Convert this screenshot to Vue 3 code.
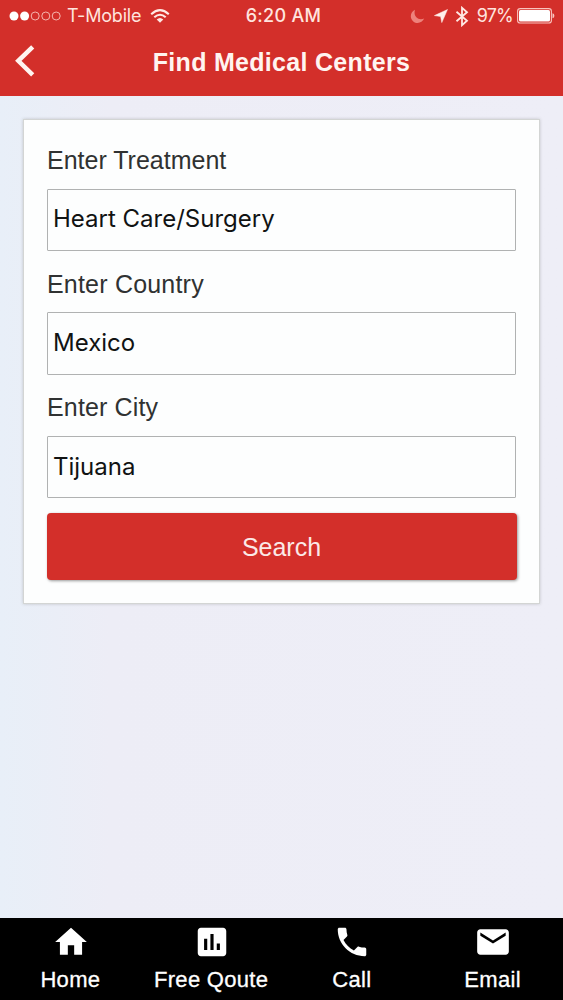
<script setup>
import { ref } from 'vue'

const fields = ref([
  { id: 'treatment', label: 'Enter Treatment', value: 'Heart Care/Surgery' },
  { id: 'country', label: 'Enter Country', value: 'Mexico' },
  { id: 'city', label: 'Enter City', value: 'Tijuana' },
])

const tabs = [
  { name: 'Home', icon: 'M10 20v-6h4v6h5v-8h3L12 3 2 12h3v8z' },
  {
    name: 'Free Qoute',
    icon: 'M19 3H5c-1.1 0-2 .9-2 2v14c0 1.1.9 2 2 2h14c1.1 0 2-.9 2-2V5c0-1.1-.9-2-2-2zM9 17H7v-7h2v7zm4 0h-2V7h2v10zm4 0h-2v-4h2v4z',
  },
  {
    name: 'Call',
    icon: 'M6.62 10.79c1.44 2.83 3.76 5.14 6.59 6.59l2.2-2.2c.27-.27.67-.36 1.02-.24 1.12.37 2.33.57 3.57.57.55 0 1 .45 1 1V20c0 .55-.45 1-1 1-9.39 0-17-7.61-17-17 0-.55.45-1 1-1h3.5c.55 0 1 .45 1 1 0 1.25.2 2.45.57 3.57.11.35.03.74-.25 1.02l-2.2 2.2z',
  },
  {
    name: 'Email',
    icon: 'M20 4H4c-1.1 0-1.99.9-1.99 2L2 18c0 1.1.9 2 2 2h16c1.1 0 2-.9 2-2V6c0-1.1-.9-2-2-2zm0 4l-8 5-8-5V6l8 5 8-5v2z',
  },
]
</script>

<template>
  <div class="screen">
    <header class="top">
      <div class="status">
        <div class="left">
          <svg class="signal" width="54" height="12" viewBox="0 0 54 12">
            <circle cx="5" cy="6" r="4.5" fill="#fff" />
            <circle cx="15.6" cy="6" r="4.5" fill="#fff" />
            <g fill="none" stroke="#f6b5ae" stroke-width="1">
              <circle cx="26.2" cy="6" r="4" />
              <circle cx="36.8" cy="6" r="4" />
              <circle cx="47.2" cy="6" r="4" />
            </g>
          </svg>
          <span class="carrier">T-Mobile</span>
          <svg class="wifi" width="20" height="14" viewBox="0 0 20 14" fill="none" stroke="#ffe9e4" stroke-width="2.1">
            <path d="M1.2 5.2Q10 -2.8 18.8 5.2" />
            <path d="M4.3 8.3Q10 3.2 15.7 8.3" />
            <path d="M6.7 10.6Q10 7.6 13.3 10.6L10 13.8z" fill="#ffe9e4" stroke="none" />
          </svg>
        </div>
        <span class="clock">6:20 AM</span>
        <div class="right">
          <svg class="moon" width="15" height="15" viewBox="0 0 15 15">
            <path d="M5 .8C-.1 3.4-.4 9.4 3.3 12.4C7 15.4 12.3 13.8 14.2 9.6C8 12.2 3 7 5 .8z" fill="#ee827b" />
          </svg>
          <svg class="arrow" width="14" height="14" viewBox="0 0 14 14">
            <path d="M13.5 .5L.4 6.6L6.6 7.5L7.8 13.6z" fill="#fff0eb" stroke="#fff0eb" stroke-width=".5" />
          </svg>
          <svg class="bluetooth" width="14" height="21" viewBox="0 0 14 21" fill="none" stroke="#ffe9e4" stroke-width="1.8">
            <path d="M1.5 5.8L12 14.8L7 19.2V1.8L12 6.2L1.5 15.2" />
          </svg>
          <span class="percent">97%</span>
          <svg class="battery" width="38" height="16" viewBox="0 0 38 16">
            <rect x=".6" y=".6" width="33.8" height="14.4" rx="2.6" fill="none" stroke="#f9c3bd" stroke-width="1.1" />
            <rect x="2" y="2" width="31" height="11.6" rx="1.5" fill="#fff" />
            <path d="M35.5 5.3Q37.4 5.6 37.4 7.8T35.5 10.3z" fill="#f9c3bd" />
          </svg>
        </div>
      </div>
      <div class="bar">
        <svg class="back" width="20" height="32" viewBox="0 0 20 32" fill="none" stroke="#fff4f0" stroke-width="4.5">
          <path d="M17.7 1.8L3.3 15.8L17.7 29.8" />
        </svg>
        <h1>Find Medical Centers</h1>
      </div>
    </header>

    <main>
      <form class="card" @submit.prevent>
        <div v-for="f in fields" :key="f.id" class="field">
          <label :for="f.id" :class="f.id">{{ f.label }}</label>
          <input :id="f.id" v-model="f.value" type="text" />
        </div>
        <button type="submit">Search</button>
      </form>
    </main>

    <nav>
      <a v-for="t in tabs" :key="t.name">
        <svg width="38" height="38" viewBox="0 0 24 24" fill="#fff"><path :d="t.icon" /></svg>
        <span>{{ t.name }}</span>
      </a>
    </nav>
  </div>
</template>

<style>
body {
  margin: 0;
}
</style>

<style scoped>
.screen {
  display: flex;
  flex-direction: column;
  height: 1000px;
  width: 563px;
  overflow: hidden;
  background: linear-gradient(90deg, #e8eff8 0, #ededf6 110px, #eeeef7 100%);
  font-family: "Liberation Sans", Arial, sans-serif;
}
.top {
  height: 96px;
  box-sizing: border-box;
  background: #d32f2a;
  color: #fff4f0;
}
.status {
  display: grid;
  grid-template-columns: 1fr auto 1fr;
  align-items: center;
  height: 32px;
  padding: 0 8px 0 9px;
  font-family: Inter, sans-serif;
  font-size: 18px;
  line-height: 32px;
  color: #ffe4df;
}
.left,
.right {
  display: flex;
  align-items: center;
}
.right {
  justify-content: flex-end;
}
.carrier {
  margin: 0 9px 0 4px;
  letter-spacing: -0.2px;
}
.clock {
  padding-left: 3px;
  font-weight: 500;
  letter-spacing: 0.3px;
}
.arrow {
  margin-left: 9px;
}
.bluetooth {
  margin-left: 7px;
}
.percent {
  margin: 0 4px 0 8px;
  letter-spacing: -0.8px;
}
.bar {
  display: grid;
  grid-template-columns: 60px 1fr 60px;
  align-items: center;
  height: 58px;
}
.back {
  margin-left: 14.5px;
}
h1 {
  margin: 2px 0 0;
  text-align: center;
  font-size: 25px;
  line-height: 30px;
  font-weight: 700;
  letter-spacing: 0.3px;
  white-space: nowrap;
}
main {
  flex: 1;
  padding: 23px 23px 0;
}
.card {
  box-sizing: border-box;
  height: 485px;
  padding: 18px 22px 0 23px;
  border: 1px solid #d3d5d4;
  background: #fdfefe;
  box-shadow: 0 0 3px rgba(90, 95, 90, 0.28);
}
.field {
  display: flex;
  flex-direction: column;
  height: 123.7px;
}
label {
  height: 50.5px;
  line-height: 45px;
  font-size: 25px;
  color: #303232;
}
label.country {
  letter-spacing: 0.2px;
}
label.city {
  letter-spacing: 0.15px;
}
input {
  box-sizing: border-box;
  height: 62.5px;
  width: 469px;
  padding: 0 5px 2px;
  border: 1px solid #b0b2b2;
  border-radius: 1px;
  outline: none;
  background: transparent;
  font-family: Inter, sans-serif;
  font-size: 24px;
  color: #111313;
}
button {
  display: block;
  width: 470px;
  height: 67px;
  margin-top: 4px;
  padding: 2px 1px 0 0;
  border: 0;
  border-radius: 4px;
  background: #d32f2a;
  box-shadow: 1px 1px 3px rgba(0, 0, 0, 0.4);
  color: #fbe9e7;
  font: 25px "Liberation Sans", Arial, sans-serif;
}
nav {
  display: grid;
  grid-template-columns: repeat(4, 1fr);
  height: 82.5px;
  background: #000;
  color: #fff;
}
nav a {
  display: flex;
  flex-direction: column;
  align-items: center;
  padding-top: 5px;
}
nav svg {
  display: block;
  margin-left: 1px;
}
nav span {
  font-size: 22px;
  line-height: 37px;
  letter-spacing: 0.3px;
  white-space: nowrap;
  -webkit-text-stroke: 0.3px #fff;
}
</style>
